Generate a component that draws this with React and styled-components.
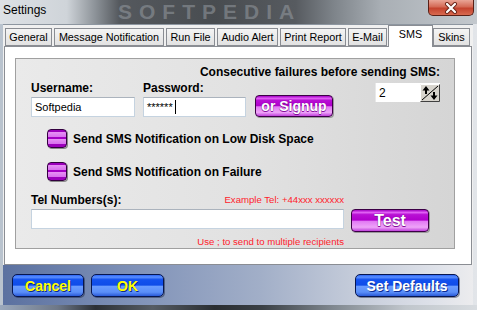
import styled, { createGlobalStyle } from "styled-components";

const GlobalStyle = createGlobalStyle`
  html, body {
    margin: 0;
    padding: 0;
  }
  body {
    width: 477px;
    height: 310px;
    overflow: hidden;
    font-family: "Liberation Sans", Arial, sans-serif;
  }
`;

const Window = styled.div`
  width: 477px;
  height: 310px;
  box-sizing: border-box;
  display: flex;
  flex-direction: column;
  padding: 0 4px 0 3px;
  background: linear-gradient(90deg, #b9c3ce 0%, #c8ced6 50%, #e2e5e9 100%);
`;

const TitleBar = styled.div`
  position: relative;
  height: 24px;
  margin: 0 -4px 0 -3px;
  display: flex;
  align-items: flex-start;
  background: linear-gradient(
    90deg,
    #dde1e5 0%,
    #cfd4d9 14%,
    #8c9298 20%,
    #55595e 25%,
    #484c50 45%,
    #575b60 62%,
    #7e848a 70%,
    #a9afb5 80%,
    #c3c8cd 100%
  );
`;

const Watermark = styled.span`
  position: absolute;
  left: 118px;
  top: 1px;
  font: bold 21px/22px "Liberation Sans", Arial, sans-serif;
  letter-spacing: 7px;
  color: rgba(150, 156, 162, 0.55);
  pointer-events: none;
`;

const Title = styled.span`
  position: relative;
  padding: 3px 0 0 3px;
  font-size: 12px;
  line-height: 14px;
  color: #000;
`;

const CloseButton = styled.div`
  margin: 0 3px 0 auto;
  width: 46px;
  height: 16px;
  box-sizing: border-box;
  border: 1px solid #5a2016;
  border-top: none;
  border-radius: 0 0 5px 5px;
  background: linear-gradient(#e9a596 0%, #d46a56 45%, #c4432e 55%, #d86a50 100%);
  display: flex;
  align-items: center;
  justify-content: center;
  position: relative;
`;

const Client = styled.div`
  flex: none;
  height: 281px;
  box-sizing: border-box;
  display: flex;
  flex-direction: column;
  background: #f0f0f0;
  border-top: 1px solid #8d96a0;
`;

const TabStrip = styled.div`
  height: 21px;
  display: flex;
  align-items: flex-end;
  gap: 2px;
  padding-left: 2px;
`;

const Tab = styled.div`
  position: relative;
  z-index: ${(p) => (p.$active ? 2 : 0)};
  flex: none;
  box-sizing: border-box;
  width: ${(p) => p.$width}px;
  height: ${(p) => (p.$active ? "22px" : "18px")};
  margin-bottom: ${(p) => (p.$active ? "-1px" : "0")};
  margin-left: ${(p) => (p.$active ? "-1px" : "0")};
  margin-right: ${(p) => (p.$active ? "-2px" : "0")};
  border: 1px solid #8a8d93;
  border-bottom: ${(p) => (p.$active ? "none" : "1px solid #8a8d93")};
  background: ${(p) => (p.$active ? "#fff" : "linear-gradient(#f4f4f4, #e2e2e2)")};
  font-size: 10.8px;
  line-height: 16px;
  text-align: center;
  color: #000;
  white-space: nowrap;
  overflow: hidden;
`;

const TabPanel = styled.div`
  position: relative;
  z-index: 1;
  flex: none;
  height: 219px;
  box-sizing: border-box;
  margin: 0 1px;
  border: 1px solid #8a8d93;
  background: #fff;
  padding: 11px 17px 0 10px;
`;

const GroupBox = styled.div`
  width: 440px;
  height: 191px;
  box-sizing: border-box;
  border: 1px solid #a0a0a0;
  background: linear-gradient(90deg, #eaeaea 0%, #e2e2e2 50%, #d5d5d5 100%);
  padding: 6px 14px 0 15px;
  display: flex;
  flex-direction: column;
`;

const BoldText = styled.div`
  font-size: 12px;
  font-weight: bold;
  line-height: 14px;
  color: #000;
  white-space: nowrap;
  text-align: ${(p) => p.$align || "left"};
`;

const TopRow = styled.div`
  display: flex;
  align-items: flex-start;
  margin-top: 2px;
`;

const Field = styled.div`
  display: flex;
  flex-direction: column;
  gap: 2px;
  width: ${(p) => p.$width}px;
  margin-right: ${(p) => p.$gap || 0}px;
`;

const TextBox = styled.div`
  box-sizing: border-box;
  height: 20px;
  width: ${(p) => (p.$width ? `${p.$width}px` : "100%")};
  border: 1px solid #c5d3e0;
  border-top-color: #abb3bd;
  background: #fff;
  padding: 0 3px;
  display: flex;
  align-items: center;
  font-size: 11px;
  color: #000;
`;

const Caret = styled.span`
  display: inline-block;
  width: 1px;
  height: 14px;
  margin-left: 2px;
  background: #000;
`;

const PurpleButton = styled.div`
  box-sizing: border-box;
  width: ${(p) => p.$width}px;
  height: ${(p) => p.$height}px;
  align-self: ${(p) => p.$align || "center"};
  border: 1px solid #3c0046;
  border-radius: 4px;
  background: linear-gradient(
    #a400c4 0%,
    #e060f4 12%,
    #b810d4 22%,
    #b000cc 48%,
    #e27af4 54%,
    #eea4f8 82%,
    #c040dc 100%
  );
  box-shadow: 1px 1px 0 #9a9a9a;
  color: #fff;
  font-size: ${(p) => p.$size}px;
  font-weight: bold;
  display: flex;
  align-items: center;
  justify-content: center;
  text-shadow: 0 0 1px #6a0080, 0 1px 0 #8a10a0;
`;

const SpinBox = styled.div`
  margin: 2px 0 0 auto;
  width: 65px;
  height: 19px;
  box-sizing: border-box;
  background: #fff;
  border-left: 1px solid #e8e8e8;
  display: flex;
  align-items: center;
  justify-content: space-between;
  padding-left: 3px;
  font-size: 12px;
  color: #000;
`;

const CheckRow = styled.div`
  display: flex;
  align-items: center;
  gap: 6px;
  padding-left: 16px;
  margin-top: ${(p) => p.$top}px;
`;

const PurpleCheck = styled.div`
  width: 20px;
  height: 19px;
  box-sizing: border-box;
  border: 1px solid #33003f;
  border-radius: 4px;
  background: linear-gradient(
    #9c00bc 0%,
    #9c00bc 14%,
    #e690f4 14%,
    #d870ee 42%,
    #a400c4 42%,
    #a400c4 54%,
    #e690f4 54%,
    #d870ee 82%,
    #9c00bc 82%
  );
  box-shadow: 1px 1px 0 #8a8a8a;
`;

const TelGrid = styled.div`
  display: grid;
  grid-template-columns: 313px 78px;
  column-gap: 7px;
  margin-top: 12px;
`;

const TelHeader = styled.div`
  display: flex;
  justify-content: space-between;
  align-items: center;
  height: 14px;
  margin-bottom: 2px;
`;

const RedNote = styled.div`
  font-size: 9.6px;
  line-height: 12px;
  margin-top: ${(p) => p.$top || 0}px;
  color: #ff1c2c;
  text-align: right;
  white-space: nowrap;
`;

const ButtonBar = styled.div`
  flex: 1;
  display: flex;
  align-items: flex-start;
  gap: 7px;
  padding: 9px 14px 0 9px;
  background: linear-gradient(
    90deg,
    #5b71a0 0%,
    #8092b8 28%,
    #a2afc8 55%,
    #c5ccda 75%,
    #e0e3ea 93%,
    #ececee 100%
  );
`;

const BlueButton = styled.div`
  box-sizing: border-box;
  width: ${(p) => p.$width}px;
  height: 23px;
  margin-left: ${(p) => (p.$push ? "auto" : "0")};
  border: 1px solid #071650;
  border-radius: 5px;
  background: linear-gradient(
    #2a64f4 0%,
    #5c90ff 10%,
    #1452ee 22%,
    #0f4ce8 48%,
    #6a9cff 54%,
    #5a8ef8 82%,
    #2a5ad8 100%
  );
  box-shadow: 1px 1px 0 rgba(20, 30, 60, 0.45);
  color: ${(p) => (p.$yellow ? "#ffff00" : "#ffffff")};
  font-size: 14px;
  font-weight: bold;
  display: flex;
  align-items: center;
  justify-content: center;
  text-shadow: 1px 1px 0 #0a2a90;
`;

const GlassEdge = styled.div`
  flex: 1;
  margin: 0 -4px 0 -3px;
  background: linear-gradient(
    90deg,
    #9aa8bc 0%,
    #6e7888 12%,
    #2c3036 20%,
    #565c64 32%,
    #2a2e32 45%,
    #3a4046 55%,
    #808890 70%,
    #c0c6cc 85%,
    #d8dce0 100%
  );
`;

function CloseIcon() {
  return (
    <svg width="14" height="12" viewBox="0 0 14 12">
      <path d="M3 2 L11 10 M11 2 L3 10" stroke="#6a2418" strokeWidth="4" strokeLinecap="round" />
      <path d="M3 2 L11 10 M11 2 L3 10" stroke="#fff" strokeWidth="2.2" strokeLinecap="round" />
    </svg>
  );
}

function SpinArrows() {
  return (
    <svg width="20" height="18" viewBox="0 0 20 18">
      <rect x="0" y="0" width="20" height="18" fill="#d8d5ce" />
      <path d="M0.5 17.5 V0.5 H19.5" stroke="#fff" fill="none" />
      <path d="M0.5 17.5 H19.5 V0.5" stroke="#404040" fill="none" />
      <path d="M2 16 L18 2" stroke="#000" strokeWidth="1" />
      <path d="M6 2 L2.5 6.5 H5 V10 H7 V6.5 H9.5 Z" fill="#000" />
      <path d="M14 16 L10.5 11.5 H13 V8 H15 V11.5 H17.5 Z" fill="#000" />
    </svg>
  );
}

const tabs = [
  { label: "General", width: 47 },
  { label: "Message Notification", width: 110 },
  { label: "Run File", width: 49 },
  { label: "Audio Alert", width: 61 },
  { label: "Print Report", width: 66 },
  { label: "E-Mail", width: 39 },
  { label: "SMS", width: 45 },
  { label: "Skins", width: 37 },
];

export default function App() {
  return (
    <>
      <GlobalStyle />
      <Window>
        <TitleBar>
          <Watermark>SOFTPEDIA</Watermark>
          <Title>Settings</Title>
          <CloseButton>
            <CloseIcon />
          </CloseButton>
        </TitleBar>
        <Client>
          <TabStrip>
            {tabs.map((t) => (
              <Tab key={t.label} $width={t.width} $active={t.label === "SMS"}>
                {t.label}
              </Tab>
            ))}
          </TabStrip>
          <TabPanel>
            <GroupBox>
              <BoldText $align="right">Consecutive failures before sending SMS:</BoldText>
              <TopRow>
                <Field $width={104} $gap={8}>
                  <BoldText>Username:</BoldText>
                  <TextBox>Softpedia</TextBox>
                </Field>
                <Field $width={103} $gap={9}>
                  <BoldText>Password:</BoldText>
                  <TextBox>
                    ******
                    <Caret />
                  </TextBox>
                </Field>
                <PurpleButton $width={78} $height={22} $size={14} $align="flex-end">
                  or Signup
                </PurpleButton>
                <SpinBox>
                  2
                  <SpinArrows />
                </SpinBox>
              </TopRow>
              <CheckRow $top={12}>
                <PurpleCheck />
                <BoldText>Send SMS Notification on Low Disk Space</BoldText>
              </CheckRow>
              <CheckRow $top={14}>
                <PurpleCheck />
                <BoldText>Send SMS Notification on Failure</BoldText>
              </CheckRow>
              <TelGrid>
                <TelHeader>
                  <BoldText>Tel Numbers(s):</BoldText>
                  <RedNote>Example Tel: +44xxx xxxxxx</RedNote>
                </TelHeader>
                <div />
                <TextBox />
                <PurpleButton $width={78} $height={23} $size={16}>
                  Test
                </PurpleButton>
                <RedNote $top={4}>Use ; to send to multiple recipients</RedNote>
              </TelGrid>
            </GroupBox>
          </TabPanel>
          <ButtonBar>
            <BlueButton $width={72} $yellow>
              Cancel
            </BlueButton>
            <BlueButton $width={73} $yellow>
              OK
            </BlueButton>
            <BlueButton $width={104} $push>
              Set Defaults
            </BlueButton>
          </ButtonBar>
        </Client>
        <GlassEdge />
      </Window>
    </>
  );
}
